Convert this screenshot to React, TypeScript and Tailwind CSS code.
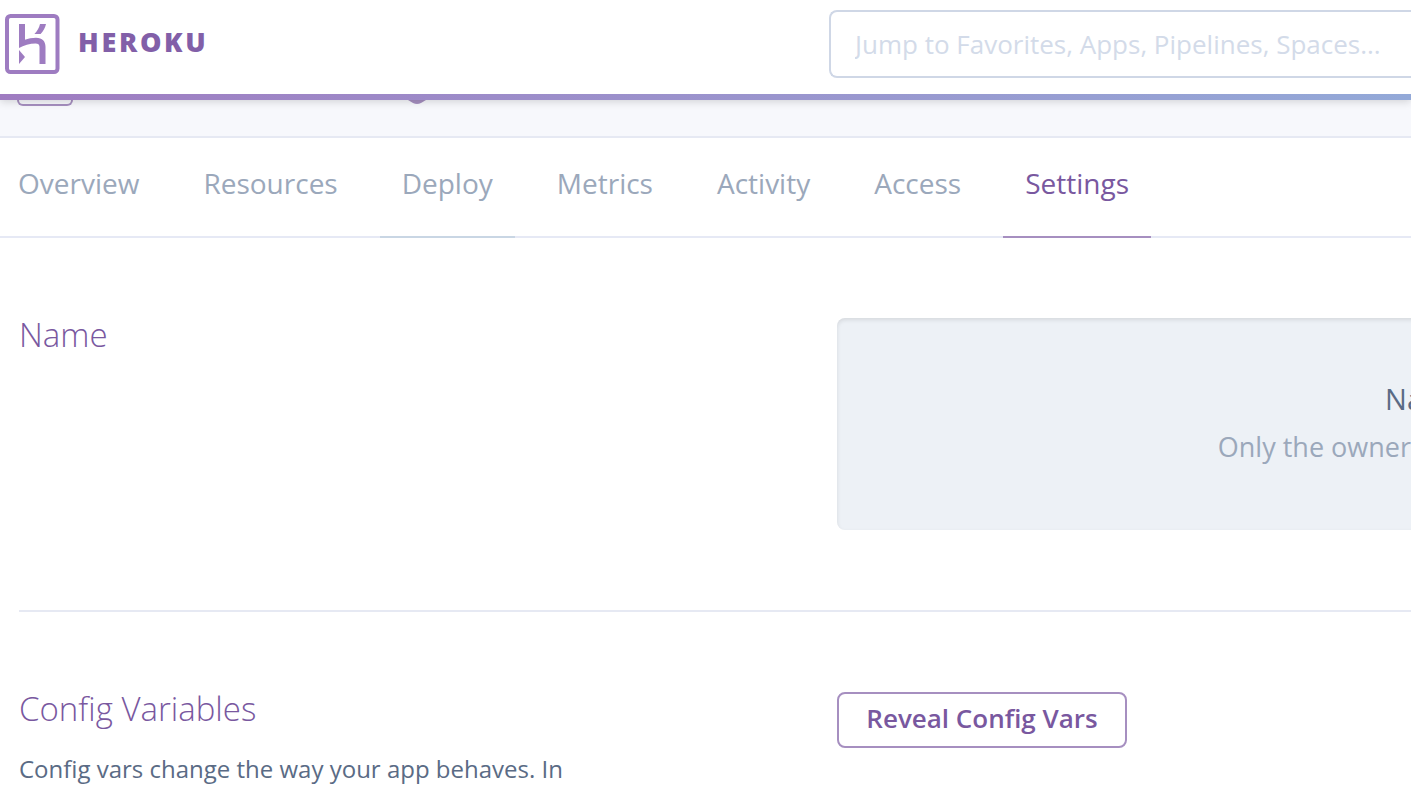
const tabs = ["Overview", "Resources", "Deploy", "Metrics", "Activity", "Access", "Settings"];

function tabStyle(tab: string) {
  if (tab === "Settings") return "border-[#a68fc0] text-[#79589f]";
  if (tab === "Deploy") return "border-[#c9d6e4] text-[#9ba8bb]";
  return "border-transparent text-[#9ba8bb]";
}

function Logo() {
  return (
    <svg viewBox="0 0 55 60" className="h-[60px] w-[55px] shrink-0" fill="#9e7cc1" aria-hidden="true">
      <rect x="2" y="2" width="50.500" height="56" rx="3.500" fill="none" stroke="#9e7cc1" strokeWidth="4" />
      <path d="M14 10h6v15.800c3-1.200 7-2.100 11-2.100 6.500 0 9.500 3.800 9.500 9V50h-6V33c0-2.600-1.400-3.600-4-3.600-5.500 0-12 2-16.500 4.600z" />
      <path d="M35 10h6c-.8 3.800-2.600 7.200-5.400 10h-6.200c2.900-3 4.800-6.300 5.600-10z" />
      <path d="M14 36l6 7-6 7z" />
    </svg>
  );
}

export default function App() {
  return (
    <div className="min-h-screen overflow-hidden bg-white font-['Open_Sans',sans-serif] text-[#9ba8bb]">
      <header className="relative z-10 shadow-[0_2px_8px_rgba(0,0,0,0.15)]">
        <div className="flex h-[94px] items-start justify-between bg-white pl-[5px]">
          <a href="#home" className="flex items-center gap-[18px] pt-[14px]">
            <Logo />
            <span className="pb-1 text-[27px] leading-8 font-extrabold tracking-widest text-[#825fa8]">HEROKU</span>
          </a>
          <div className="flex w-[582px] pt-[10px]">
            <input
              type="search"
              aria-label="Jump to"
              placeholder="Jump to Favorites, Apps, Pipelines, Spaces..."
              className="h-[68px] w-full rounded-l-lg border-2 border-r-0 border-[#cfd7e6] bg-white pl-6 text-[26px] text-[#5a6b85] outline-none placeholder:text-[#d3dbe9]"
            />
          </div>
        </div>
        <div className="h-[6px] bg-linear-to-r from-[#9f7cc1] to-[#93a9d8]" />
      </header>

      <div className="flex h-[38px] items-start gap-[333px] border-b-2 border-[#e6e9f3] bg-[#f7f8fc] pl-[17px]">
        <div className="h-[6px] w-14 rounded-b-lg border-2 border-t-0 border-[#a68fc0]" />
        <svg viewBox="0 0 22 4" className="h-1 w-[22px]" fill="#a68fc0" aria-hidden="true">
          <path d="M2 0h18l-5 3q-4 2-8 0z" />
        </svg>
      </div>

      <nav className="flex h-[100px] items-stretch gap-5 border-b-2 border-[#e6e9f5]">
        {tabs.map((tab) => (
          <a
            key={tab}
            href={"#" + tab.toLowerCase()}
            className={"-mb-[2px] border-b-2 px-[22px] pt-[25px] text-[28px] leading-10 first:pl-[18px] " + tabStyle(tab)}
          >
            {tab}
          </a>
        ))}
      </nav>

      <main className="pl-[19px]">
        <section className="flex items-start justify-between border-b-2 border-[#e6e9f3] py-20">
          <h2 className="text-[33px] leading-[34px] font-light text-[#79589f]">Name</h2>
          <div className="-mr-4 flex h-[212px] w-[590px] flex-col items-end gap-2 rounded-lg bg-[#edf1f6] pt-[61px] pr-4 shadow-[inset_0_2px_4px_rgba(0,0,0,0.1)]">
            <p className="-mr-3 text-[29px] leading-10 text-[#5a6b85]">Na</p>
            <p className="text-[27px] leading-10 whitespace-nowrap">Only the owner</p>
          </div>
        </section>

        <section className="flex items-start justify-between pt-20">
          <div className="flex flex-col gap-7">
            <h2 className="text-[33px] leading-[34px] font-light text-[#79589f]">Config Variables</h2>
            <p className="text-[24px] leading-[30px] text-[#5a6b85]">Config vars change the way your app behaves. In</p>
          </div>
          <div className="w-[574px]">
            <button
              type="button"
              className="h-14 w-[290px] rounded-lg border-2 border-[#a68fc0] bg-white pb-1 text-[26px] font-semibold text-[#79589f]"
            >
              Reveal Config Vars
            </button>
          </div>
        </section>
      </main>
    </div>
  );
}
